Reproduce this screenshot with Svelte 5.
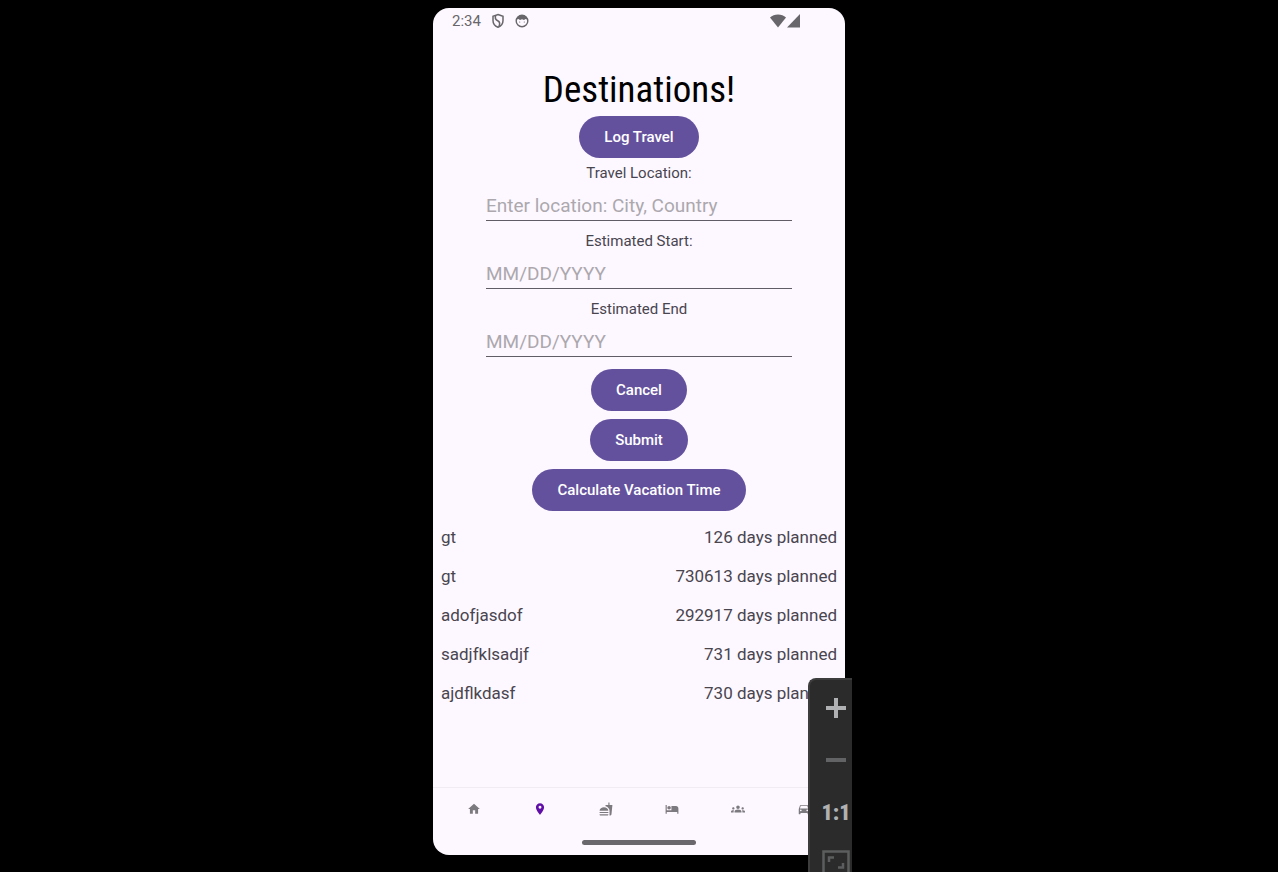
<script>
  let travelLocation = $state('');
  let start = $state('');
  let end = $state('');
  let active = $state('Destinations');

  const trips = [
    { place: 'gt', days: 126 },
    { place: 'gt', days: 730613 },
    { place: 'adofjasdof', days: 292917 },
    { place: 'sadjfklsadjf', days: 731 },
    { place: 'ajdflkdasf', days: 730 }
  ];

  const tabs = [
    { name: 'Home', path: 'M10 20v-6h4v6h5v-8h3L12 3 2 12h3v8z' },
    { name: 'Destinations', path: 'M12 2C8.13 2 5 5.13 5 9c0 5.25 7 13 7 13s7-7.75 7-13c0-3.87-3.13-7-7-7zm0 9.5a2.5 2.5 0 0 1 0-5 2.5 2.5 0 0 1 0 5z' },
    { name: 'Dining', path: 'M18.06 22.99h1.66c.84 0 1.53-.64 1.63-1.46L23 5.05h-5V1h-1.97v4.05h-4.97l.3 2.34c1.71.47 3.31 1.32 4.27 2.26 1.44 1.42 2.43 2.89 2.43 5.29v8.05zM1 21.99V21h15.03v.99c0 .55-.45 1-1.01 1H2.01c-.56 0-1.01-.45-1.01-1zm15.03-7c0-8-15.03-8-15.03 0h15.03zM1.02 17h15v2h-15z' },
    { name: 'Accommodation', path: 'M7 13c1.66 0 3-1.34 3-3S8.66 7 7 7s-3 1.34-3 3 1.34 3 3 3zm12-6h-8v7H3V5H1v15h2v-3h18v3h2v-9c0-2.21-1.79-4-4-4z' },
    { name: 'Community', path: 'M12 12.75c1.63 0 3.07.39 4.24.9 1.08.48 1.76 1.56 1.76 2.73V18H6v-1.61c0-1.18.68-2.26 1.76-2.73 1.17-.52 2.61-.91 4.24-.91zM4 13c1.1 0 2-.9 2-2s-.9-2-2-2-2 .9-2 2 .9 2 2 2zm1.13 1.1C4.76 14.04 4.39 14 4 14c-.99 0-1.93.21-2.78.58C.48 14.9 0 15.62 0 16.43V18h4.5v-1.61c0-.83.23-1.61.63-2.29zM20 13c1.1 0 2-.9 2-2s-.9-2-2-2-2 .9-2 2 .9 2 2 2zm4 3.43c0-.81-.48-1.53-1.22-1.85A6.95 6.95 0 0 0 20 14c-.39 0-.76.04-1.13.1.4.68.63 1.46.63 2.29V18H24v-1.57zM12 6c1.66 0 3 1.34 3 3s-1.34 3-3 3-3-1.34-3-3 1.34-3 3-3z' },
    { name: 'Transport', path: 'M18.92 6.01C18.72 5.42 18.16 5 17.5 5h-11c-.66 0-1.21.42-1.42 1.01L3 12v8c0 .55.45 1 1 1h1c.55 0 1-.45 1-1v-1h12v1c0 .55.45 1 1 1h1c.55 0 1-.45 1-1v-8l-2.08-5.99zM6.5 16c-.83 0-1.5-.67-1.5-1.5S5.67 13 6.5 13s1.5.67 1.5 1.5S7.33 16 6.5 16zm11 0c-.83 0-1.5-.67-1.5-1.5s.67-1.5 1.5-1.5 1.5.67 1.5 1.5-.67 1.5-1.5 1.5zM5 11l1.5-4.5h11L19 11H5z' }
  ];
</script>

<div class="stage">
  <div class="phone">
    <header class="status">
      <span>2:34</span>
      <svg width="14" height="16" viewBox="0 0 14 16" aria-hidden="true">
        <path d="M7 1.5 12 3.200v4.300c0 3-2 5.600-5 6.800-3-1.200-5-3.800-5-6.800V3.200z" fill="none" stroke="currentColor" stroke-width="1.500" />
        <path d="M4.600 2.600c-.8 3 .2 4.300 2.100 5.200 2 .9 2.400 3 1.300 5.500" fill="none" stroke="currentColor" stroke-width="1.500" />
      </svg>
      <svg width="14" height="14" viewBox="0 0 14 14" aria-hidden="true">
        <circle cx="7" cy="7" r="5.800" fill="none" stroke="currentColor" stroke-width="1.400" />
        <path d="M1.300 5.600C2 2.500 4.200 1 7 1s5 1.500 5.700 4.600L10.600 5 9 6 7 5.300 5 6 3.400 5z" fill="currentColor" />
        <circle cx="4.700" cy="8" r=".6" fill="currentColor" />
        <circle cx="9.300" cy="8" r=".6" fill="currentColor" />
      </svg>
      <span class="signal">
        <svg width="31" height="14" viewBox="0 0 31 14" aria-hidden="true">
          <path d="M0 3.500C4-.6 12-.6 16 3.500L8 13.500z" fill="currentColor" />
          <path d="M30 0v13.500H17z" fill="currentColor" />
        </svg>
      </span>
    </header>

    <main>
      <h1>Destinations!</h1>
      <button class="pill">Log Travel</button>

      <form onsubmit={(e) => e.preventDefault()}>
        <div class="field">
          <label for="location">Travel Location:</label>
          <input id="location" bind:value={travelLocation} placeholder="Enter location: City, Country" />
        </div>
        <div class="field">
          <label for="start">Estimated Start:</label>
          <input id="start" bind:value={start} placeholder="MM/DD/YYYY" />
        </div>
        <div class="field">
          <label for="end">Estimated End</label>
          <input id="end" bind:value={end} placeholder="MM/DD/YYYY" />
        </div>
        <div class="actions">
          <button class="pill" type="reset">Cancel</button>
          <button class="pill" type="submit">Submit</button>
          <button class="pill" type="button">Calculate Vacation Time</button>
        </div>
      </form>

      <ul>
        {#each trips as trip}
          <li><span>{trip.place}</span><span>{trip.days} days planned</span></li>
        {/each}
      </ul>
    </main>

    <nav>
      {#each tabs as tab}
        <button class="tab" class:active={active === tab.name} aria-label={tab.name} onclick={() => (active = tab.name)}>
          <svg width="14" height="14" viewBox="0 0 24 24" aria-hidden="true"><path d={tab.path} fill="currentColor" fill-rule="evenodd" /></svg>
        </button>
      {/each}
    </nav>
    <div class="home-bar"><span></span></div>

    <aside class="zoom">
      <button aria-label="Zoom in">
        <svg width="20" height="20" viewBox="0 0 20 20"><path d="M8 0h4v8h8v4h-8v8H8v-8H0V8h8z" fill="#afb1b3" /></svg>
      </button>
      <button aria-label="Zoom out">
        <svg width="20" height="20" viewBox="0 0 20 20"><path d="M0 8h20v4H0z" fill="#626365" /></svg>
      </button>
      <button class="ratio">1:1</button>
      <button aria-label="Fit to window">
        <svg width="28" height="28" viewBox="0 0 28 28">
          <path d="M1.500 1.500h25v25h-25zM7 12V7.500h5M21 13v4.500h-5" fill="none" stroke="#5c5d5e" stroke-width="2.500" />
        </svg>
      </button>
    </aside>
  </div>
</div>

<style>
  :global(body) {
    margin: 0;
    background: #000;
  }
  .stage {
    box-sizing: border-box;
    min-height: 100vh;
    padding: 8px 0 17px;
    display: flex;
    justify-content: center;
    overflow: hidden;
    font-family: Roboto, sans-serif;
    color: #49454f;
  }
  .phone {
    position: relative;
    width: 100%;
    max-width: 412px;
    display: flex;
    flex-direction: column;
    background: #fdf8ff;
    border-radius: 16px;
  }
  button,
  input {
    font: inherit;
  }
  .status {
    display: flex;
    align-items: center;
    gap: 10px;
    height: 26px;
    padding: 0 44px 0 19px;
    font-size: 15px;
    color: #68666a;
  }
  .status svg {
    display: block;
  }
  .signal {
    margin-left: auto;
  }
  main {
    flex: 1;
    display: flex;
    flex-direction: column;
    align-items: center;
    padding: 34px 8px 0;
  }
  h1 {
    margin: 0 0 4px;
    font: 400 37px/44px 'Roboto Condensed', 'Liberation Sans Narrow', Roboto, sans-serif;
    color: #000;
  }
  .pill {
    height: 42px;
    padding: 0 25px;
    border: 0;
    border-radius: 21px;
    background: #64519e;
    color: #fff;
    font-size: 15px;
    font-weight: 500;
  }
  form {
    display: flex;
    flex-direction: column;
    gap: 10px;
    width: 100%;
    max-width: 306px;
    margin-top: 5px;
  }
  .field {
    display: flex;
    flex-direction: column;
  }
  label {
    font-size: 15px;
    line-height: 20px;
    text-align: center;
  }
  input {
    box-sizing: border-box;
    width: 100%;
    height: 38px;
    padding: 8px 0 0;
    border: 0;
    border-bottom: 1px solid #615d66;
    border-radius: 0;
    outline: 0;
    background: none;
    font-size: 19px;
    color: #1d1b20;
  }
  input::placeholder {
    color: #aca8ae;
    opacity: 1;
  }
  .actions {
    display: flex;
    flex-direction: column;
    align-items: center;
    gap: 8px;
    padding-top: 2px;
  }
  ul {
    align-self: stretch;
    list-style: none;
    margin: 7px 0 0;
    padding: 0;
  }
  li {
    display: flex;
    justify-content: space-between;
    font-size: 17px;
    line-height: 39px;
  }
  nav {
    display: flex;
    padding: 0 8px;
    border-top: 1px solid #f1ecf4;
  }
  .tab {
    flex: 1;
    height: 42px;
    padding: 0;
    border: 0;
    background: none;
    color: #7d7a7f;
  }
  .tab svg {
    display: block;
    margin: 0 auto;
  }
  .tab.active {
    color: #5f0fa8;
  }
  .home-bar {
    display: flex;
    justify-content: center;
    padding: 10px 0;
  }
  .home-bar span {
    width: 114px;
    height: 5px;
    border-radius: 3px;
    background: #6b686d;
  }
  .zoom {
    position: absolute;
    right: -7px;
    bottom: -17px;
    box-sizing: border-box;
    width: 44px;
    height: 194px;
    padding: 2px 0 0 4px;
    border: solid #3d3d3d;
    border-width: 2px 0 0 2px;
    border-radius: 8px 0 0 0;
    background: #2b2b2b;
    overflow: hidden;
  }
  .zoom button {
    display: flex;
    align-items: center;
    justify-content: center;
    width: 100%;
    height: 52px;
    padding: 0 0 0 6px;
    border: 0;
    background: none;
  }
  .zoom svg {
    flex: none;
  }
  .zoom .ratio {
    font-family: 'Roboto Condensed', 'Liberation Sans Narrow', Roboto, sans-serif;
    font-size: 22px;
    font-weight: 900;
    color: #afb1b3;
  }
</style>
